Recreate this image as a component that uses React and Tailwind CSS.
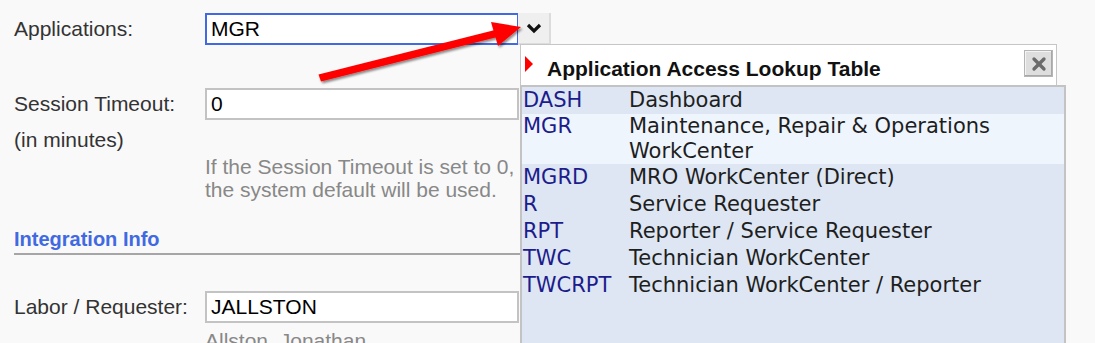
import { X } from 'lucide-react'

const APPS = [
  { code: 'DASH', name: 'Dashboard' },
  { code: 'MGR', name: 'Maintenance, Repair & Operations WorkCenter', active: true },
  { code: 'MGRD', name: 'MRO WorkCenter (Direct)' },
  { code: 'R', name: 'Service Requester' },
  { code: 'RPT', name: 'Reporter / Service Requester' },
  { code: 'TWC', name: 'Technician WorkCenter' },
  { code: 'TWCRPT', name: 'Technician WorkCenter / Reporter' }
]

function Chevron() {
  return (
    <svg width="16" height="12" viewBox="0 0 16 12">
      <path d="M2 3 L8 9 L14 3" fill="none" stroke="#111" strokeWidth="3.2" />
    </svg>
  )
}

function Arrow() {
  return (
    <svg className="absolute left-0 top-0 pointer-events-none" width="560" height="100" viewBox="0 0 560 100">
      <defs>
        <filter id="shadow" x="-10%" y="-30%" width="120%" height="160%">
          <feDropShadow dx="1.5" dy="2" stdDeviation="1.2" floodColor="#000" floodOpacity="0.45" />
        </filter>
      </defs>
      <g filter="url(#shadow)">
        <path d="M321 81.5 L318.5 74.5 L497 29.5 L499.5 36.5 Z" fill="#ff0000" />
        <path d="M521 27 L491 22 L498 46 Z" fill="#ff0000" />
      </g>
    </svg>
  )
}

function Field({ value, focused }) {
  return (
    <div
      className={`w-[314px] h-[32px] flex items-center px-[4px] bg-white text-[21px] text-black border-2 ${
        focused ? 'border-[#4169e1]' : 'border-[#c3c3c3]'
      }`}
    >
      {value}
    </div>
  )
}

export default function App() {
  return (
    <div
      className="relative w-[1095px] h-[343px] overflow-hidden bg-[#f9f9f9] text-[#333]"
      style={{ fontFamily: '"Liberation Sans", Arial, sans-serif' }}
    >
      <div className="pl-[14px] pt-[12px]">
        <div className="flex items-center h-[33px]">
          <div className="w-[191px] text-[21px]">Applications:</div>
          <div className="pt-px"><Field value="MGR" focused /></div>
          <button className="w-[33px] h-[32px] -ml-px bg-[#efefef] border-r-2 border-b-2 border-[#dcdcdc] flex items-center justify-center">
            <Chevron />
          </button>
        </div>

        <div className="flex items-center h-[32px] mt-[43px]">
          <div className="w-[191px] text-[21px]">Session Timeout:</div>
          <Field value="0" />
        </div>
        <div className="text-[21px] leading-[24px] mt-[8px]">(in minutes)</div>
        <div className="ml-[191px] mt-[3px] text-[21px] leading-[23px] text-[#888]">
          <div>If the Session Timeout is set to 0,</div>
          <div>the system default will be used.</div>
        </div>

        <div className="mt-[26px] w-[506px] border-b-2 border-[#a6a6a6] pb-[2px]">
          <div className="text-[20px] leading-[24px] font-bold text-[#4169e1]">Integration Info</div>
        </div>

        <div className="flex items-center h-[32px] mt-[36px]">
          <div className="w-[191px] text-[21px]">Labor / Requester:</div>
          <Field value="JALLSTON" />
        </div>
        <div className="ml-[191px] mt-[6px] text-[21px] leading-[24px] text-[#888]">Allston, Jonathan</div>
      </div>

      <Arrow />

      <div className="absolute left-[520px] top-[44px]">
        <div className="w-[537px] h-[41px] bg-white border border-[#c6c6c6] border-b-0 flex items-end pb-[4px] pl-[4px] relative">
          <svg width="8" height="16" viewBox="0 0 8 16" className="mb-[9px]">
            <path d="M0 0 L8 8 L0 16 Z" fill="#ff0000" />
          </svg>
          <div className="ml-[14px] text-[21px] leading-[25px] font-bold text-[#111]">
            Application Access Lookup Table
          </div>
          <button className="absolute right-[3px] top-[5px] w-[29px] h-[27px] bg-[#dedede] border border-[#b5b5b5] shadow-[inset_-1px_-1px_0_#a8a8a8,inset_1px_1px_0_#f4f4f4] flex items-center justify-center">
            <X size={20} strokeWidth={4} color="#6b6b6b" />
          </button>
        </div>
        <div
          className="w-[546px] h-[270px] bg-[#dde6f2] border-2 border-[#c3c3c3] text-[21px]"
          style={{ fontFamily: '"DejaVu Sans", Verdana, sans-serif' }}
        >
          {APPS.map((a) => (
            <div
              key={a.code}
              className={`flex pl-px leading-[25px] ${a.active ? 'bg-[#eef5fd] py-0' : 'py-px'}`}
            >
              <div className="w-[106px] shrink-0 text-[#1c1c8c]">{a.code}</div>
              <div className="flex-1 text-[#1e1e1e] pr-[8px]">{a.name}</div>
            </div>
          ))}
        </div>
      </div>
    </div>
  )
}
